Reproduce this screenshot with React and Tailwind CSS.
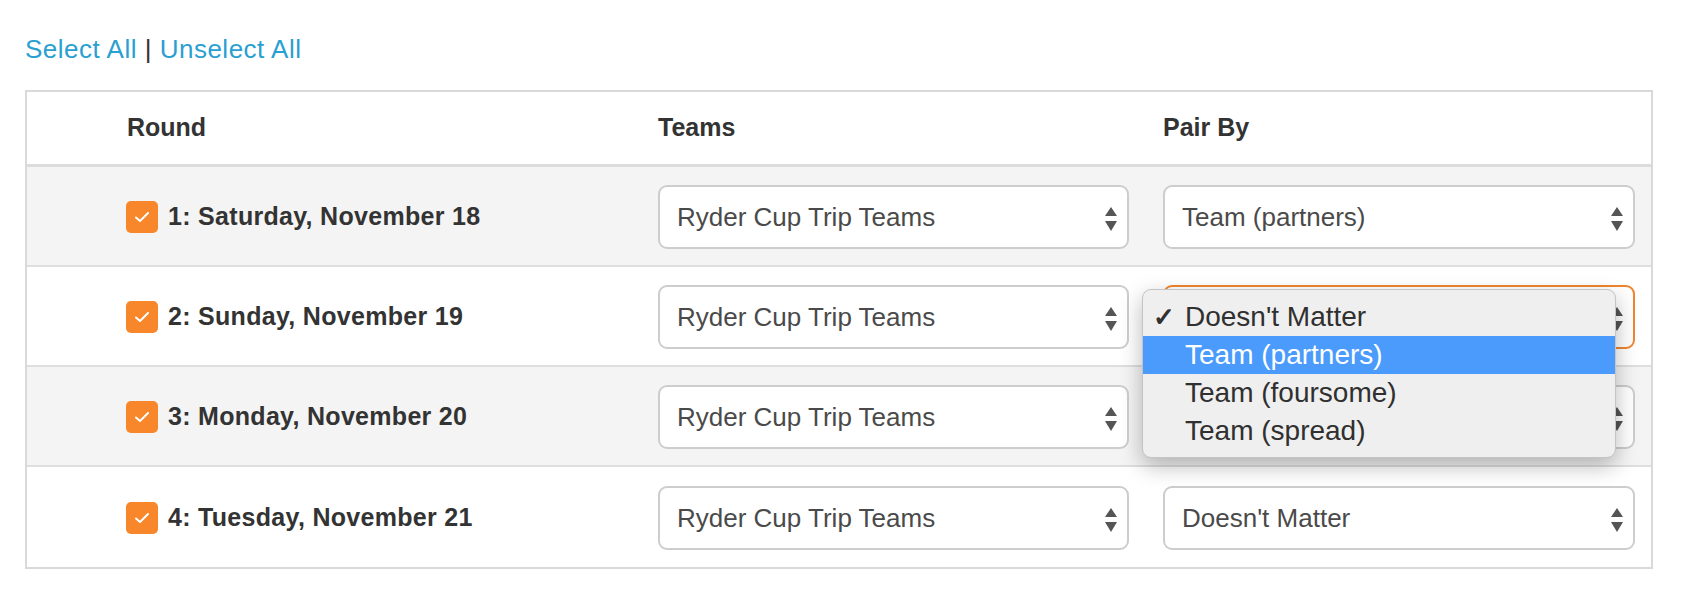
import React from "react";

const rounds = [
  { label: "1: Saturday, November 18", pair: "Team (partners)", bg: "bg-[#f4f4f4]" },
  { label: "2: Sunday, November 19", pair: "", bg: "bg-white", open: true },
  { label: "3: Monday, November 20", pair: "", bg: "bg-[#f4f4f4]" },
  { label: "4: Tuesday, November 21", pair: "Doesn't Matter", bg: "bg-white" },
];

function Arrows() {
  return (
    <svg width="14" height="26" viewBox="0 0 14 26" className="absolute right-[9px] top-[19px]">
      <polygon points="7,1 13,10 1,10" fill="#555" />
      <polygon points="1,15 13,15 7,25" fill="#555" />
    </svg>
  );
}

function Select({ value, focused, className = "" }) {
  return (
    <div
      className={`relative h-[64px] rounded-[9px] bg-white border-2 flex items-center pl-[17px] ${
        focused ? "border-[#f0852d]" : "border-[#cdcdcd]"
      } ${className}`}
    >
      <span className="text-[26px] leading-[30px] text-[#4a4a4a]">{value}</span>
      <Arrows />
    </div>
  );
}

function Check() {
  return (
    <div className="w-[32px] h-[32px] rounded-[5px] bg-[#f8862b] flex items-center justify-center shrink-0">
      <svg width="16" height="12" viewBox="0 0 16 12">
        <polyline points="2,6.5 6,10 14,2" fill="none" stroke="#fff" strokeWidth="2" strokeLinecap="round" strokeLinejoin="round" />
      </svg>
    </div>
  );
}

function Menu() {
  const items = ["Doesn't Matter", "Team (partners)", "Team (foursome)", "Team (spread)"];
  return (
    <div className="absolute left-[-21px] top-[4px] w-[474px] h-[169px] z-10 rounded-[9px] bg-[#efefef] border border-[#c4c4c4] shadow-[0_8px_22px_rgba(0,0,0,0.28)] py-[8px] overflow-hidden">
      {items.map((it, i) => (
        <div
          key={it}
          className={`relative h-[38px] flex items-center pl-[42px] text-[28px] leading-[38px] ${
            i === 1 ? "bg-[#4a9bfb] text-white" : "text-[#303030]"
          }`}
        >
          {i === 0 && (
            <span className="absolute left-[10px] top-0 text-[26px] leading-[38px] font-bold text-[#303030]">✓</span>
          )}
          {it}
        </div>
      ))}
    </div>
  );
}

export default function App() {
  return (
    <div className="w-[1692px] h-[602px] bg-white pt-[34px] pl-[25px]" style={{ fontFamily: '"Liberation Sans", Arial, sans-serif' }}>
      <div className="text-[26px] leading-[30px] mb-[26px] tracking-[0.5px]">
        <span className="text-[#2a9fd1]">Select All</span>
        <span className="text-[#333]"> | </span>
        <span className="text-[#2a9fd1]">Unselect All</span>
      </div>
      <div className="w-[1628px] border-2 border-[#d9d9d9]">
        <div className="h-[75px] flex items-center border-b-[3px] border-[#dcdcdc] text-[25px] font-bold text-[#333]">
          <div className="w-[631px] pl-[100px]">Round</div>
          <div className="w-[505px]">Teams</div>
          <div>Pair By</div>
        </div>
        {rounds.map((r, i) => (
          <div
            key={r.label}
            className={`h-[100px] flex items-center pt-[2px] ${r.bg} ${i < 3 ? "border-b-2 border-[#dedede]" : ""}`}
          >
            <div className="w-[631px] pl-[99px] flex items-center gap-[10px]">
              <Check />
              <span className="text-[25px] font-bold text-[#333] tracking-[0.3px]">{r.label}</span>
            </div>
            <Select value="Ryder Cup Trip Teams" className="w-[471px]" />
            <div className="relative w-[472px] ml-[34px]">
              <Select value={r.pair} focused={r.open} />
              {r.open && <Menu />}
            </div>
          </div>
        ))}
      </div>
    </div>
  );
}
